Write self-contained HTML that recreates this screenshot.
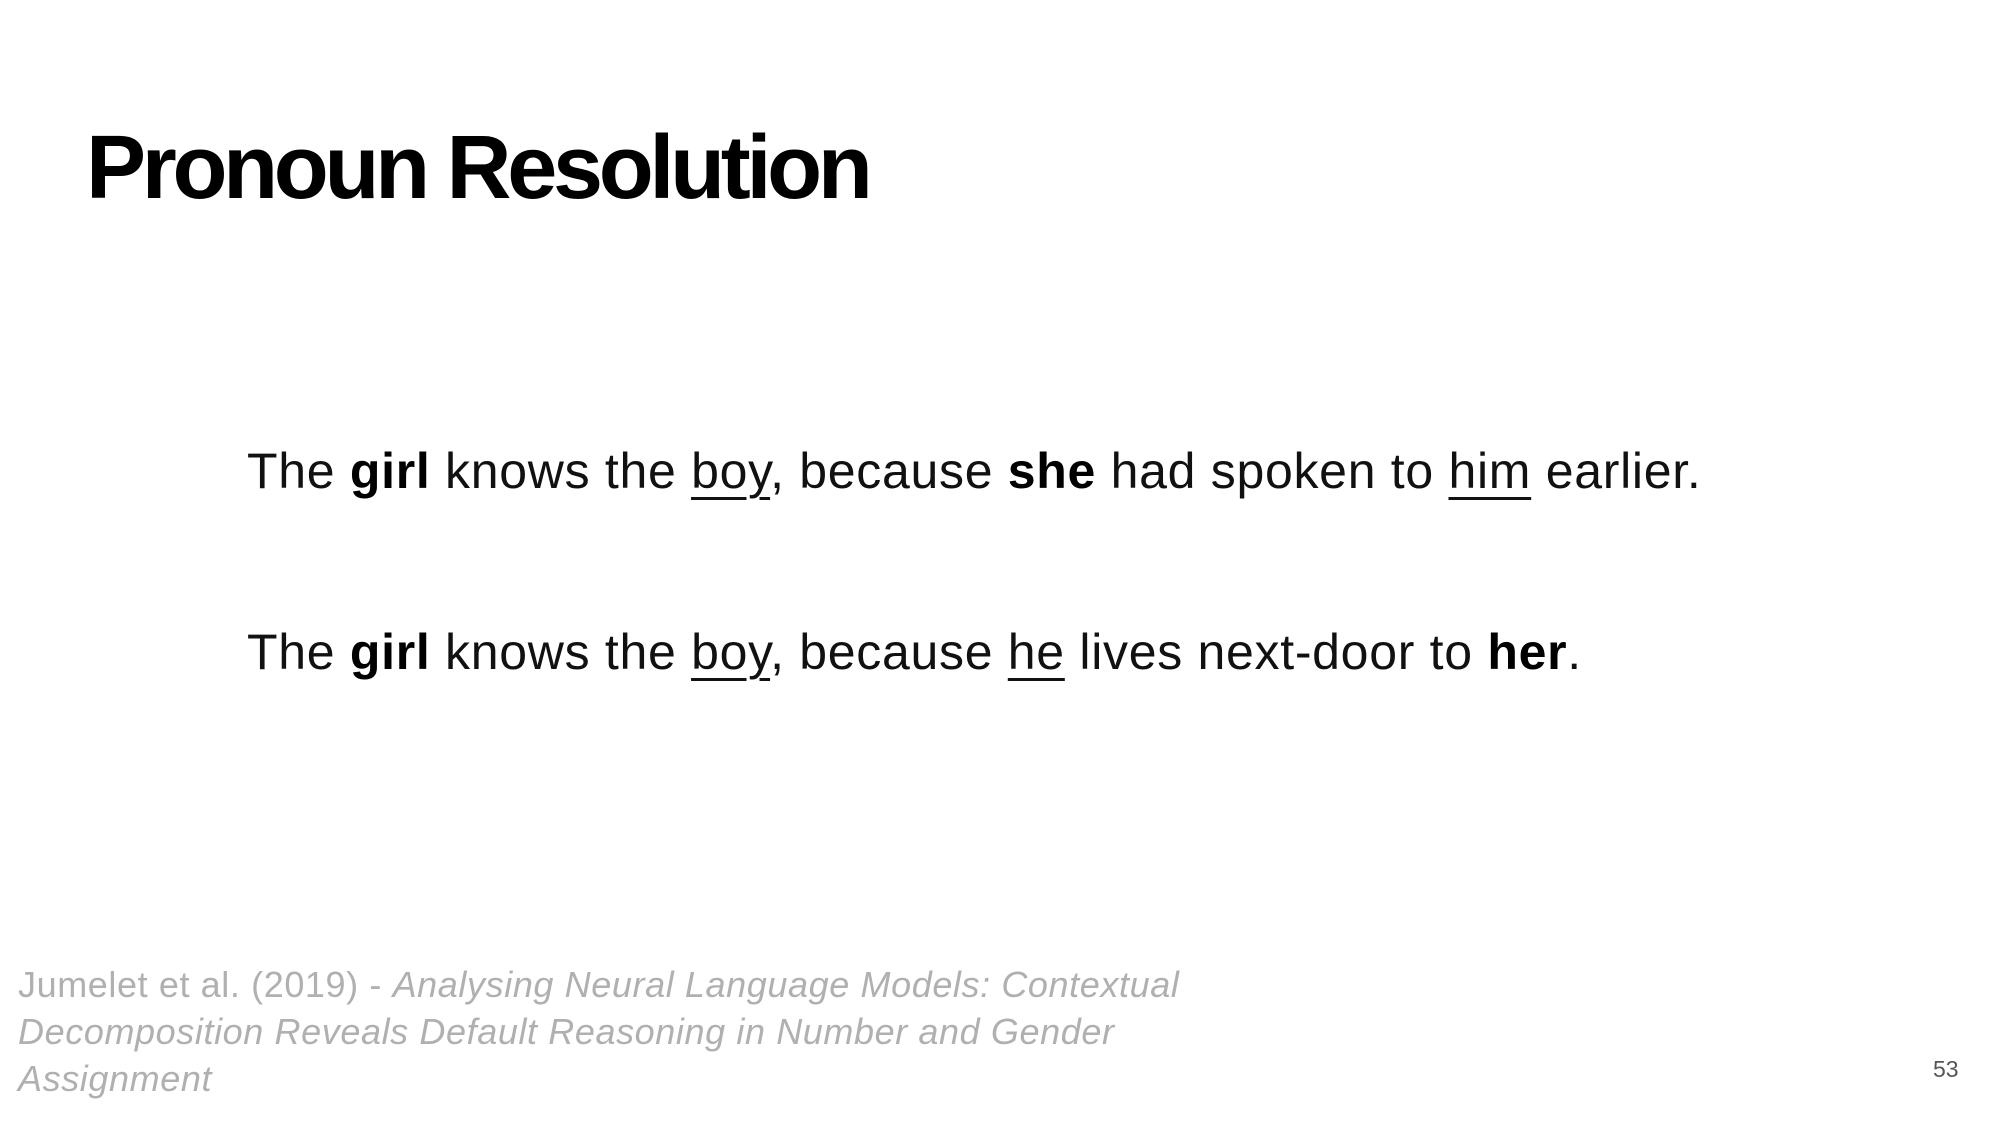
<!DOCTYPE html>
<html><head><meta charset="utf-8"><style>
html,body{margin:0;padding:0;background:#fff;}
body{width:2000px;height:1125px;position:relative;overflow:hidden;font-family:"Liberation Sans",sans-serif;}
.t{position:absolute;left:86px;top:118px;font-size:90px;font-weight:bold;letter-spacing:-4.3px;line-height:100px;color:#000;white-space:nowrap;}
.s{position:absolute;left:247px;font-size:50px;line-height:60px;color:#111;white-space:nowrap;letter-spacing:0.7px;}
.s b{font-weight:bold;color:#000;}
.s u{text-decoration:underline;text-decoration-thickness:3px;text-underline-offset:9px;}
.f{position:absolute;left:18px;top:961px;font-size:36px;line-height:47px;color:#b0b0b0;white-space:nowrap;letter-spacing:0.6px;}
.f i{font-style:italic;}
.n{position:absolute;left:1933px;top:1056px;font-size:23px;color:#555;}
</style></head><body>
<div class="t">Pronoun Resolution</div>
<div class="s" style="top:441px">The <b>girl</b> knows the <u>boy</u>, because <b>she</b> had spoken to <u>him</u> earlier.</div>
<div class="s" style="top:622px">The <b>girl</b> knows the <u>boy</u>, because <u>he</u> lives next-door to <b>her</b>.</div>
<div class="f">Jumelet et al. (2019) - <i>Analysing Neural Language Models: Contextual</i><br><i>Decomposition Reveals Default Reasoning in Number and Gender</i><br><i>Assignment</i></div>
<div class="n">53</div>
</body></html>
